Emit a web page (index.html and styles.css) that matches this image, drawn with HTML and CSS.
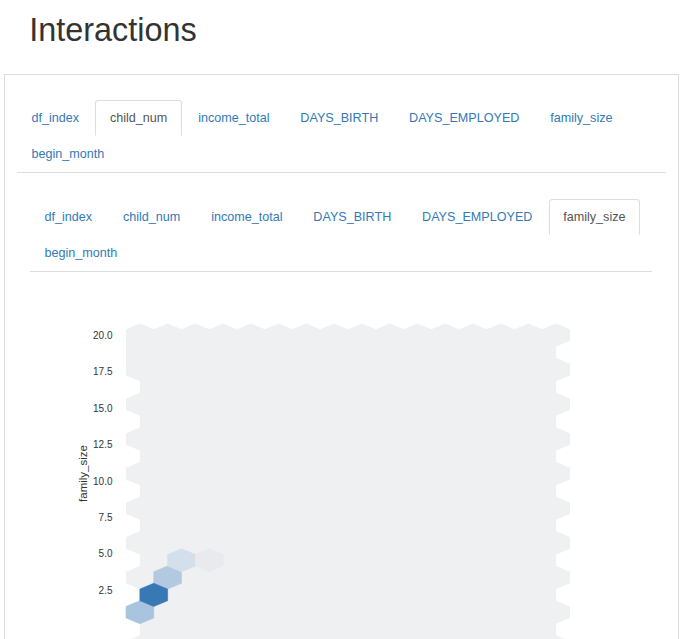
FILE: index.html
```html
<!DOCTYPE html>
<html lang="en">
<head>
<meta charset="utf-8">
<title>Interactions</title>
<link rel="stylesheet" href="styles.css">
</head>
<body>
<h1 class="page-title">Interactions</h1>
<div class="panel">
  <ul class="tabs">
    <li><a href="#">df_index</a></li>
    <li class="active"><a href="#">child_num</a></li>
    <li><a href="#">income_total</a></li>
    <li><a href="#">DAYS_BIRTH</a></li>
    <li><a href="#">DAYS_EMPLOYED</a></li>
    <li><a href="#">family_size</a></li>
    <li><a href="#">begin_month</a></li>
  </ul>
  <div class="tab-content">
    <ul class="tabs">
      <li><a href="#">df_index</a></li>
      <li><a href="#">child_num</a></li>
      <li><a href="#">income_total</a></li>
      <li><a href="#">DAYS_BIRTH</a></li>
      <li><a href="#">DAYS_EMPLOYED</a></li>
      <li class="active"><a href="#">family_size</a></li>
      <li><a href="#">begin_month</a></li>
    </ul>
    <svg class="plot" width="622" height="367" viewBox="30 272 622 367" xmlns="http://www.w3.org/2000/svg">
      <defs>
        <polygon id="hx" points="0,-11.55 13.875,-5.775 13.875,5.775 0,11.55 -13.875,5.775 -13.875,-5.775"/>
      </defs>
      <path fill="#eff0f2" d="M126 329.225l13.875-5.775l13.875 5.775l13.875-5.775l13.875 5.775l13.875-5.775l13.875 5.775l13.875-5.775l13.875 5.775l13.875-5.775l13.875 5.775l13.875-5.775l13.875 5.775l13.875-5.775l13.875 5.775l13.875-5.775l13.875 5.775l13.875-5.775l13.875 5.775l13.875-5.775l13.875 5.775l13.875-5.775l13.875 5.775l13.875-5.775l13.875 5.775l13.875-5.775l13.875 5.775l13.875-5.775l13.875 5.775l13.875-5.775l13.875 5.775l13.875-5.775l13.875 5.775v11.55l-13.875 5.775v11.55l13.875 5.775v11.55l-13.875 5.775v11.55l13.875 5.775v11.55l-13.875 5.775v11.55l13.875 5.775v11.55l-13.875 5.775v11.55l13.875 5.775v11.55l-13.875 5.775v11.55l13.875 5.775v11.55l-13.875 5.775v11.55l13.875 5.775v11.55l-13.875 5.775v11.55l13.875 5.775v11.55l-13.875 5.775v11.55l13.875 5.775v11.55l-13.875 5.775v11.55l13.875 5.775v11.55l-13.875 5.775l-13.875-5.775l-13.875 5.775l-13.875-5.775l-13.875 5.775l-13.875-5.775l-13.875 5.775l-13.875-5.775l-13.875 5.775l-13.875-5.775l-13.875 5.775l-13.875-5.775l-13.875 5.775l-13.875-5.775l-13.875 5.775l-13.875-5.775l-13.875 5.775l-13.875-5.775l-13.875 5.775l-13.875-5.775l-13.875 5.775l-13.875-5.775l-13.875 5.775l-13.875-5.775l-13.875 5.775l-13.875-5.775l-13.875 5.775l-13.875-5.775l-13.875 5.775l-13.875-5.775l-13.875 5.775l-13.875-5.775v-11.55l13.875-5.775v-11.55l-13.875-5.775v-11.55l13.875-5.775v-11.55l-13.875-5.775v-11.55l13.875-5.775v-11.55l-13.875-5.775v-11.55l13.875-5.775v-11.55l-13.875-5.775v-11.55l13.875-5.775v-11.55l-13.875-5.775v-11.55l13.875-5.775v-11.55l-13.875-5.775v-11.55l13.875-5.775v-11.55l-13.875-5.775v-11.55l13.875-5.775v-11.55l-13.875-5.775v-11.55Z"/>
      <use href="#hx" x="139.875" y="612.2" fill="#a9c4de" stroke="#a9c4de" stroke-width="0.6"/>
      <use href="#hx" x="167.625" y="577.55" fill="#b2c9e0" stroke="#b2c9e0" stroke-width="0.6"/>
      <use href="#hx" x="181.5" y="560.225" fill="#d3dfeb" stroke="#d3dfeb" stroke-width="0.6"/>
      <use href="#hx" x="209.25" y="560.225" fill="#e8eaee" stroke="#e8eaee" stroke-width="0.6"/>
      <use href="#hx" x="153.75" y="594.875" fill="#3778b5" stroke="#3778b5" stroke-width="0.6"/>
      <g class="ticks" text-anchor="end">
        <text x="112.5" y="338.6">20.0</text>
        <text x="112.5" y="375.1">17.5</text>
        <text x="112.5" y="411.5">15.0</text>
        <text x="112.5" y="448">12.5</text>
        <text x="112.5" y="484.5">10.0</text>
        <text x="112.5" y="521">7.5</text>
        <text x="112.5" y="557.4">5.0</text>
        <text x="112.5" y="593.9">2.5</text>
      </g>
      <text class="ylabel" text-anchor="middle" transform="translate(86.5 473.5) rotate(-90)">family_size</text>
    </svg>
  </div>
</div>
</body>
</html>
```

FILE: styles.css
```css
html, body {
  margin: 0;
  padding: 0;
  background: #fff;
}

body {
  font-family: "Liberation Sans", Arial, sans-serif;
  font-size: 12.6px;
  color: #333;
}

.page-title {
  margin: 0;
  padding: 12px 0 0 29.2px;
  font-size: 32.4px;
  line-height: 36px;
  font-weight: normal;
  color: #333;
}

.panel {
  margin: 26px 3px 0 4px;
  border: 1px solid #ddd;
  padding: 25px 12px 0 12px;
}

.tabs {
  list-style: none;
  margin: 0;
  padding: 0;
  display: flex;
  flex-wrap: wrap;
  border-bottom: 1px solid #ddd;
}

.tabs li {
  margin-right: 1.8px;
}

.tabs a {
  display: block;
  padding: 8px 13.5px;
  line-height: 18px;
  border: 1px solid transparent;
  border-radius: 3.6px 3.6px 0 0;
  color: #337ab7;
  text-decoration: none;
}

.tabs li.active a {
  color: #555;
  background: #fff;
  border-color: #ddd #ddd transparent;
}

.tab-content {
  padding: 25.5px 14px 0 13px;
}

.plot {
  display: block;
}

.plot .ticks text {
  font-family: "Liberation Sans", Arial, sans-serif;
  font-size: 10px;
  fill: #333;
}

.plot .ylabel {
  font-family: "Liberation Sans", Arial, sans-serif;
  font-size: 11.5px;
  fill: #333;
}
```
